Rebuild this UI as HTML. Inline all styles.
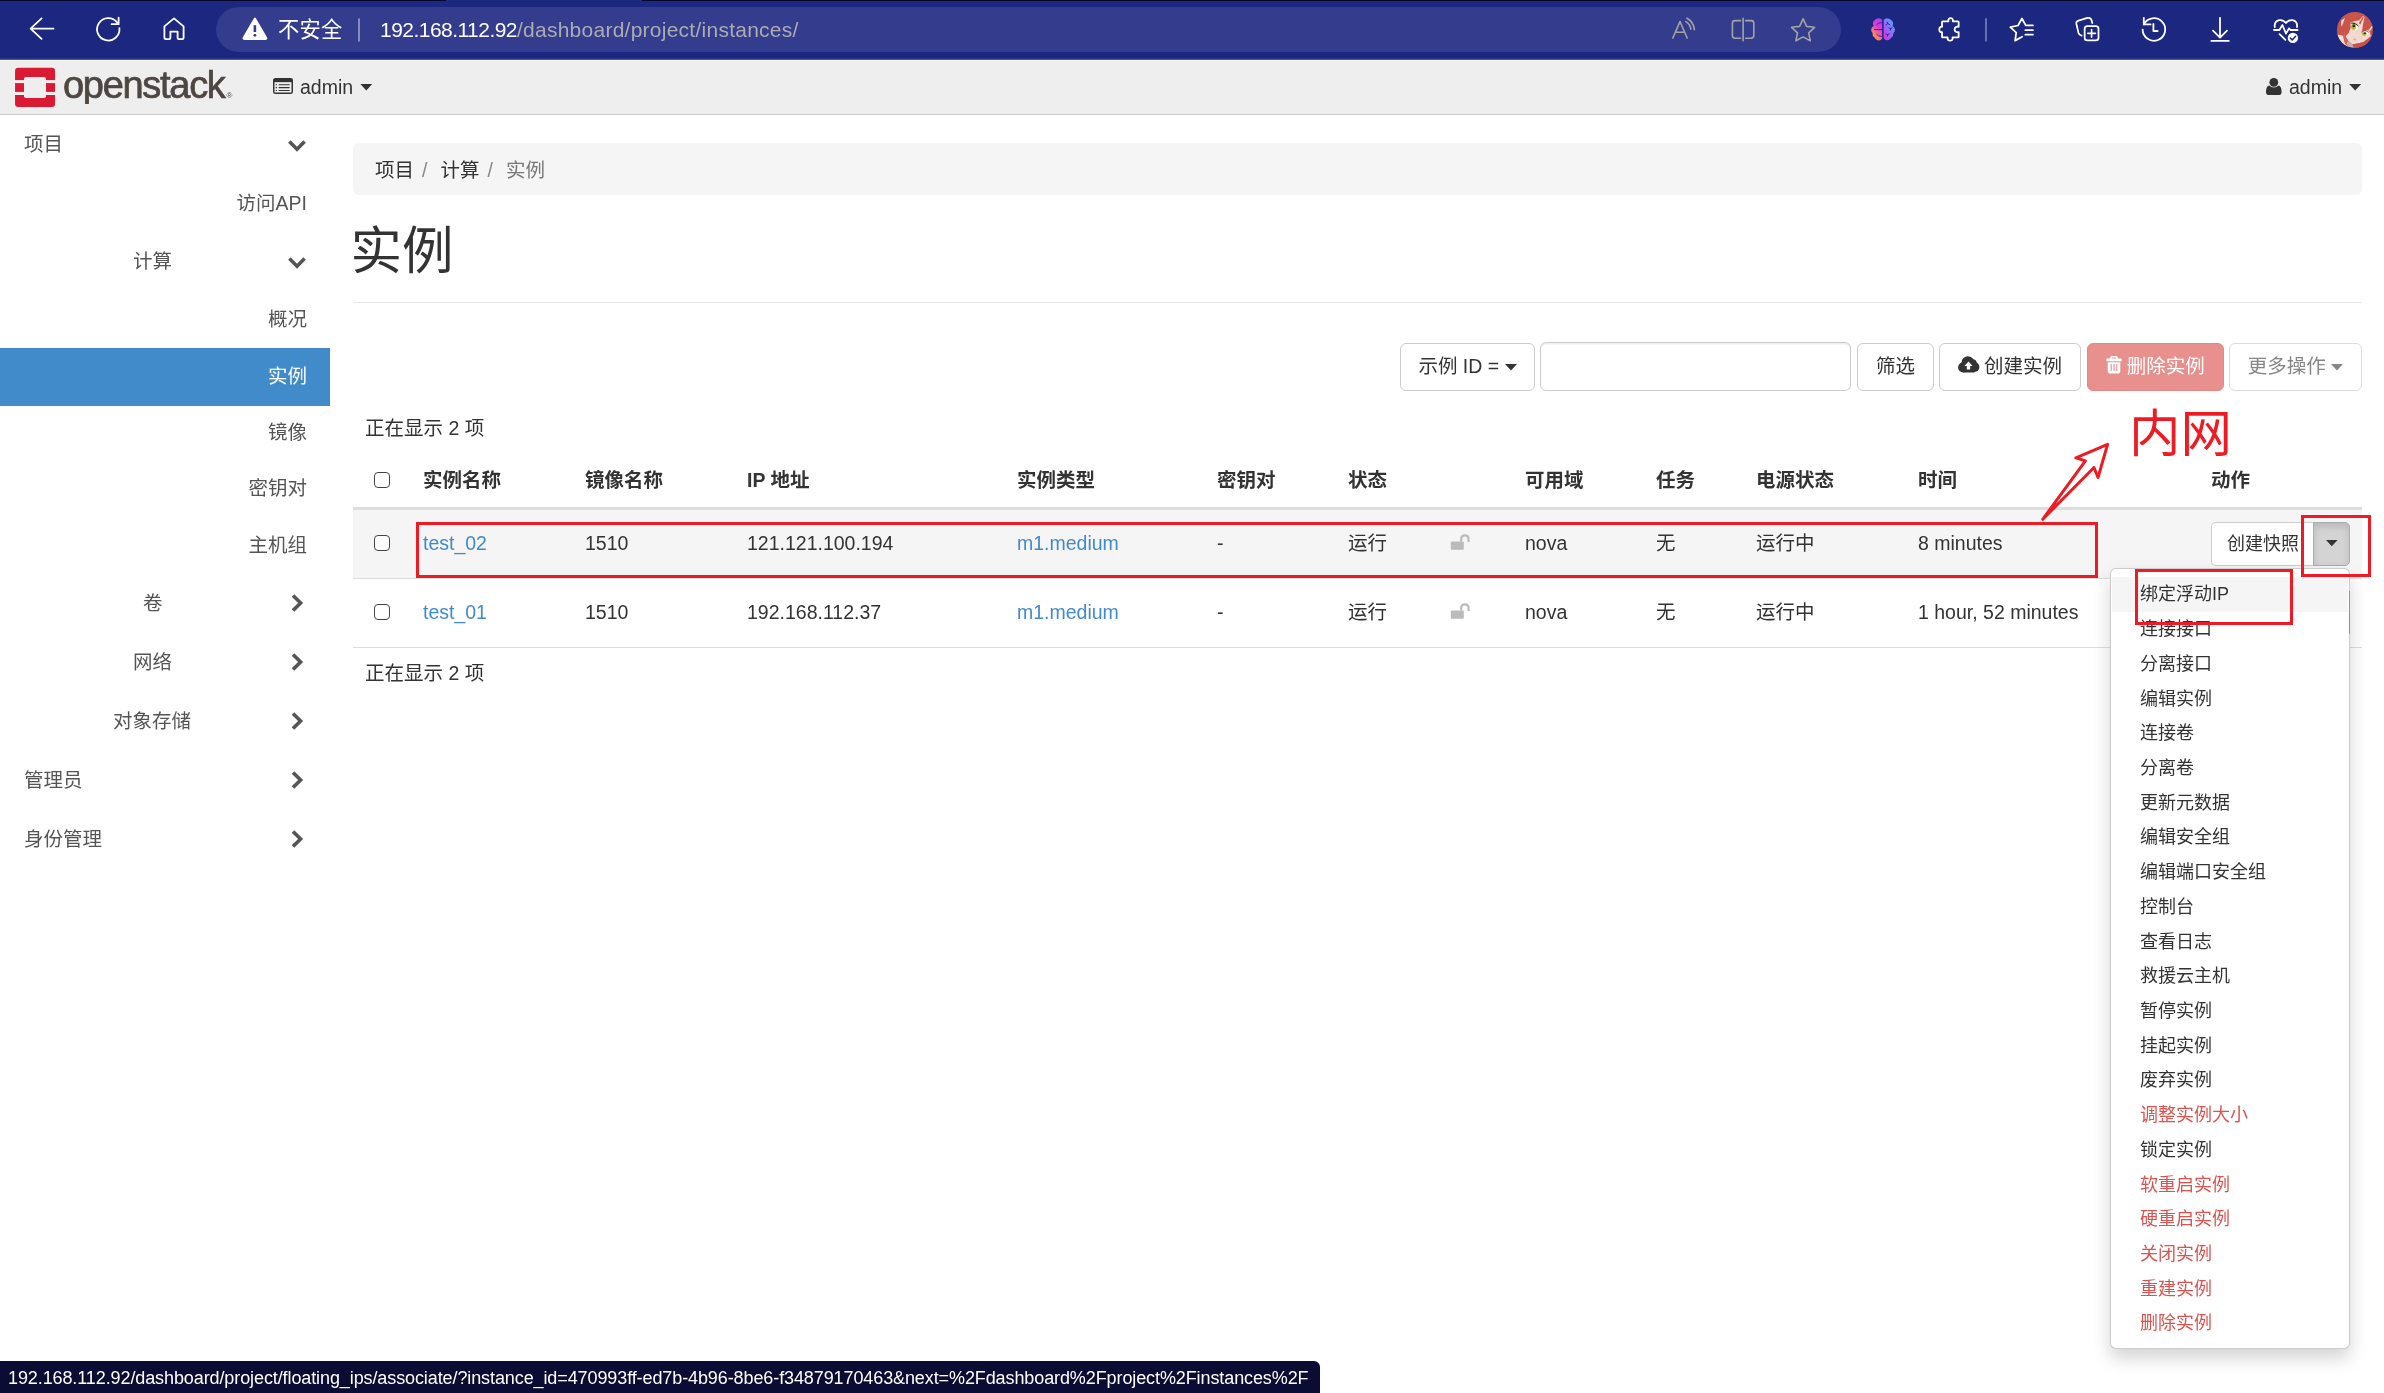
<!DOCTYPE html>
<html lang="zh-CN">
<head>
<meta charset="utf-8">
<title>实例 - OpenStack Dashboard</title>
<style>
*{box-sizing:border-box;margin:0;padding:0}
html,body{width:2384px;height:1393px;overflow:hidden;background:#fff}
body{will-change:transform}
body{position:relative;font-family:"Liberation Sans","Noto Sans CJK SC",sans-serif;font-size:19.5px;color:#333;line-height:1}
.abs{position:absolute;white-space:nowrap}
/* ---------- browser chrome ---------- */
#chrome{position:absolute;left:0;top:0;width:2384px;height:60px;background:#1c2780}
#chrome .topline{position:absolute;left:0;top:0;width:100%;height:1px;background:#05062a}
#chrome .botline{position:absolute;left:0;top:57.5px;width:100%;height:2.5px;background:#4a539a;border-top:1px solid #2c3689}
#pill{position:absolute;left:216px;top:7px;width:1625px;height:45px;border-radius:23px;background:#333c8d}
#chrome svg{position:absolute;overflow:visible}
.ct{position:absolute;white-space:nowrap;color:#fff;font-size:21px;line-height:30px;top:14.5px}
/* ---------- navbar ---------- */
#navbar{position:absolute;left:0;top:60px;width:2384px;height:55px;background:#eee;border-top:1px solid #f7f7f3;border-bottom:1.5px solid #ccc}
/* ---------- sidebar ---------- */
.sb{position:absolute;white-space:nowrap;font-size:19.5px;line-height:28px;color:#555}
.sb.r{right:2077px;text-align:right}
#sel{position:absolute;left:0;top:348px;width:330px;height:58px;background:#428bca}
.chev{position:absolute;width:18px;height:18px}
/* ---------- content ---------- */
#crumb{position:absolute;left:353px;top:143px;width:2009px;height:52px;background:#f5f5f5;border-radius:6px}
#hr{position:absolute;left:353px;top:302px;width:2009px;height:1px;background:#e8e8e8}
.btn{position:absolute;top:343px;height:48px;border:1.5px solid #ccc;border-radius:6px;background:#fff;font-size:19.5px;line-height:44px;color:#333;white-space:nowrap;text-align:center}
.th{position:absolute;white-space:nowrap;font-weight:bold;font-size:19.5px;line-height:28px;top:466px;color:#333}
.td{position:absolute;white-space:nowrap;font-size:19.5px;line-height:28px;color:#333}
.lnk{color:#428bca}
.cb{position:absolute;width:16px;height:16px;border:1.8px solid #444;border-radius:4px;background:#fff}
.red{position:absolute;border:3px solid #ed1c24}
.mi{position:absolute;left:2140px;white-space:nowrap;font-size:18px;line-height:26px;color:#333}
.mi.d{color:#d9534f}
</style>
</head>
<body>

<!-- ================= BROWSER CHROME ================= -->
<div id="chrome">
  <div class="topline"></div>
  <div style="position:absolute;left:446px;top:0;width:196px;height:1px;background:#1c2780"></div>
  <div class="botline"></div>
  <div id="pill"></div>

  <svg width="2384" height="60" viewBox="0 0 2384 60" style="left:0;top:0" fill="none" stroke="#fff" stroke-width="1.8" stroke-linecap="round" stroke-linejoin="round">
    <!-- back -->
    <path d="M53.5 28.6H30.6M41.6 18.4L30.6 28.6L41.6 38.8"/>
    <!-- refresh -->
    <path d="M119.4 28.2A11.2 11.2 0 1 1 117.2 22.6"/>
    <path d="M118.6 17.6V24.2H111.6"/>
    <!-- home -->
    <path d="M174 18.4L164.4 26.4V37.6Q164.4 39.2 166 39.2H169.2Q170.4 39.2 170.4 38V31.6H177.6V38Q177.6 39.2 178.8 39.2H182Q183.6 39.2 183.6 37.6V26.4Z"/>
    <!-- warning triangle -->
    <path d="M254.9 18.6L266 37.4Q266.8 38.9 265.2 38.9H244.6Q243 38.9 243.8 37.4Z" fill="#fff" stroke-width="2"/>
    <path d="M254.9 25.2V32" stroke="#333c8d" stroke-width="2.6" stroke-linecap="butt"/>
    <circle cx="254.9" cy="35.3" r="1.4" fill="#333c8d" stroke="none"/>
    <!-- url separator -->
    <path d="M359 18.4V41.6" stroke="#9096c4" stroke-width="1.8" stroke-linecap="butt"/>
    <!-- read aloud -->
    <g stroke="#a3a3a3" stroke-width="1.6">
      <path d="M1672.8 38L1680 21.6L1687.2 38M1675.4 32.3H1684.6"/>
      <path d="M1685.8 21.6Q1690 24 1690.8 29.2"/>
      <path d="M1687 18.2Q1693.4 21.6 1694.4 29.6"/>
      <!-- split screen -->
      <path d="M1740.6 20.6H1735Q1732.4 20.6 1732.4 23.2V35.6Q1732.4 38.2 1735 38.2H1740.6M1745.6 20.6H1751.2Q1753.8 20.6 1753.8 23.2V35.6Q1753.8 38.2 1751.2 38.2H1745.6M1743.1 18.2V40.8"/>
      <!-- star -->
      <path d="M1803.1 18.8L1806.6 26.4L1814.6 27.3L1808.7 32.9L1810.3 40.8L1803.1 36.9L1795.9 40.8L1797.5 32.9L1791.6 27.3L1799.6 26.4Z"/>
    </g>
    <!-- brain -->
    <defs>
      <linearGradient id="bl" x1="0.85" y1="0" x2="0.25" y2="1"><stop offset="0" stop-color="#b93cf6"/><stop offset=".4" stop-color="#d93ad8"/><stop offset=".65" stop-color="#f26a8c"/><stop offset=".95" stop-color="#ffa52a"/></linearGradient>
      <linearGradient id="br" x1="0.9" y1="0" x2="0.1" y2="1"><stop offset="0" stop-color="#45b4ff"/><stop offset=".45" stop-color="#8a72f8"/><stop offset="1" stop-color="#dc30e4"/></linearGradient>
    </defs>
    <g transform="translate(1860,8) scale(0.05033)">
      <path d="M440 240Q420 205 370 205Q310 210 290 245Q250 270 258 315Q262 345 272 360Q225 385 222 425Q222 465 250 495Q238 550 290 585Q310 625 350 640Q400 660 440 610Z" fill="url(#bl)" stroke="none"/>
      <path d="M470 240Q490 205 540 205Q600 210 622 245Q662 270 658 315Q656 345 648 360Q692 385 695 425Q695 465 664 495Q672 550 615 595Q590 630 555 640Q505 650 470 600Z" fill="url(#br)" stroke="none"/>
      <path d="M288 428H440M330 332Q350 292 432 290M330 522Q350 562 432 566M518 332L552 310L546 282M552 310L592 332M578 398L612 410L642 388M612 410L602 442M514 514L546 530L582 514M546 530V558" stroke="#1c2780" stroke-width="17" fill="none"/>
      <path d="M1630 277Q1630 265 1642 265L1757 265C1730 182 1870 182 1843 265L1948 265Q1960 265 1960 277L1960 374C1853 346 1853 506 1960 478L1960 573Q1960 585 1948 585L1838 585C1865 668 1715 668 1742 585L1642 585Q1630 585 1630 573L1630 478C1558 502 1558 350 1630 374Z" stroke-width="36"/>
    </g>
    <!-- separator -->
    <path d="M1986 18.2V41.6" stroke="#7b82b8" stroke-width="1.6" stroke-linecap="butt"/>
    <!-- favorites + collections -->
    <g transform="translate(2000,8) scale(0.05033)" stroke-width="35">
      <path d="M440 572L300 648L322 490L205 382L358 348L436 208L512 346H654M504 440H654M504 530H654"/>
      <path d="M1622 548Q1570 535 1558 490L1518 318Q1508 268 1560 252L1738 198Q1800 182 1818 240L1834 298"/>
      <rect x="1682" y="362" width="275" height="280" rx="52"/>
      <path d="M1820 428V580M1744 504H1896" stroke-width="32"/>
    </g>
    <!-- history -->
    <path d="M2143.8 24.4A11.3 11.3 0 1 1 2142.6 29.6"/>
    <path d="M2143.8 17.8V24.4H2150.6"/>
    <path d="M2153.4 24V31H2157.6"/>
    <!-- download -->
    <path d="M2220 17.8V37.4M2213 30.6L2220 37.6L2227 30.6M2211.4 40.9H2228.8"/>
    <!-- heart pulse -->
    <path d="M2274.8 27.2Q2274 21.4 2279.2 20.2Q2283.2 19.6 2285.9 23Q2288.6 19.6 2292.6 20.2Q2297.8 21.4 2297 27.2"/>
    <path d="M2274 30H2279.4L2282.4 25L2286 33.6L2289 28.4L2290.6 30H2297.6M2279.6 34.2L2285.4 39.8"/>
    <circle cx="2292.9" cy="37.9" r="5.2" fill="#fff" stroke="none"/>
    <path d="M2290.3 38L2292.2 39.9L2295.6 36.2" stroke="#1c2780" stroke-width="1.5"/>
    <!-- avatar -->
    <defs><clipPath id="av"><circle cx="2354.9" cy="29.9" r="18"/></clipPath></defs>
    <g clip-path="url(#av)" stroke="none"><g transform="translate(2330,6) scale(0.03446)">
      <rect x="150" y="120" width="1150" height="1150" fill="#c8544c"/>
      <path d="M590 480L700 440L850 410L960 285L1005 335L960 520L935 700L900 790L1010 720L1110 700L1160 770L1185 880L960 1050L650 1115L520 1000L450 880L540 780L600 640Z" fill="#f1d9cf"/>
      <path d="M215 830L380 860L440 1100L560 1190L480 1230L300 1100L215 920Z" fill="#f3ddd2"/>
      <path d="M520 1010L650 1120L710 1215L560 1195L470 1090Z" fill="#c2b4aa"/>
      <path d="M650 1115L960 1050L1200 900L1180 1100L1000 1230L700 1230Z" fill="#c8524a"/>
      <path d="M380 860L440 1100L470 1090L520 1000L450 880L430 700Z" fill="#d0605a"/>
      <path d="M325 430L435 340L360 560L320 590Z" fill="#f0ddd6"/>
      <path d="M840 500L960 300L985 320L880 540Z" fill="#c8544c"/>
      <path d="M1120 700L1225 565L1235 615L1160 735Z" fill="#f3e3dc"/>
      <ellipse cx="740" cy="610" rx="70" ry="85" fill="#fff"/>
      <ellipse cx="685" cy="605" rx="75" ry="88" fill="#b4b52c"/>
      <ellipse cx="690" cy="580" rx="40" ry="40" fill="#2e2a12"/>
      <path d="M590 490Q720 440 850 600L820 590Q720 490 600 510Z" fill="#3a1f1c"/>
      <ellipse cx="1060" cy="800" rx="50" ry="55" fill="#fff"/>
      <ellipse cx="995" cy="815" rx="72" ry="50" fill="#b9b92e"/>
      <ellipse cx="1010" cy="790" rx="36" ry="28" fill="#3a3414"/>
      <path d="M1000 715Q1090 690 1140 800L1110 770Q1070 720 1000 730Z" fill="#3a1f1c"/>
      <ellipse cx="720" cy="972" rx="38" ry="30" fill="#ee9f96"/>
    </g></g>
  </svg>
  <div class="ct" style="left:278px;top:15px;font-size:21.3px;letter-spacing:0.2px">不安全</div>
  <div class="ct" id="url" style="left:380px;font-size:21px;letter-spacing:-0.53px">192.168.112.92<span style="color:#acacb0;letter-spacing:0.25px">/dashboard/project/instances/</span></div>
</div>

<!-- ================= NAVBAR ================= -->
<div id="navbar"></div>
<svg class="abs" style="left:14px;top:67px" width="42" height="41" viewBox="0 0 42 41">
  <rect x="1.05" y="0.8" width="40" height="39.1" rx="3.2" fill="#da1a32"/>
  <rect x="10" y="10" width="22" height="21" rx="1.8" fill="#eee"/>
  <rect x="0" y="13.1" width="11" height="3" fill="#eee"/>
  <rect x="31" y="13.1" width="11" height="3" fill="#eee"/>
  <rect x="0" y="24.9" width="11" height="3.1" fill="#eee"/>
  <rect x="31" y="24.9" width="11" height="3.1" fill="#eee"/>
</svg>
<div class="abs" id="logotxt" style="left:63px;top:59.5px;height:44.2px;overflow:hidden;padding-right:3px;font-size:38px;line-height:50px;color:#4e4641;letter-spacing:-1.3px;-webkit-text-stroke:0.7px #4e4641">openstack<span style="font-size:8px;letter-spacing:0;-webkit-text-stroke:0;position:relative;top:0px;left:2px">&reg;</span></div>
<svg class="abs" style="left:272px;top:78px" width="22" height="17" viewBox="0 0 22 17">
  <rect x="1.75" y="0.85" width="18.5" height="14.5" rx="1.7" fill="none" stroke="#333" stroke-width="1.5"/>
  <rect x="1.75" y="0.85" width="18.5" height="3.3" fill="#333"/>
  <path d="M3.7 6.7h1.3M6.7 6.7h11M3.7 9.6h1.3M6.7 9.6h11M3.7 12.5h1.3M6.7 12.5h11" stroke="#333" stroke-width="1.15"/>
</svg>
<div class="abs" id="nvadmin" style="left:300px;top:73px;line-height:28px;color:#333">admin</div>
<svg class="abs" style="left:360px;top:84px" width="13" height="7" viewBox="0 0 13 7"><path d="M0.4 0h11.8L6.3 6.6Z" fill="#333"/></svg>
<svg class="abs" style="left:2265px;top:77px" width="18" height="19" viewBox="0 0 18 19">
  <circle cx="8.8" cy="5.3" r="4.4" fill="#333"/>
  <path d="M4.2 8.6Q1.2 9.2 1 14.6Q0.8 18 3.4 18H14.2Q16.8 18 16.6 14.6Q16.4 9.2 13.4 8.6Q11.4 10.6 8.8 10.6Q6.2 10.6 4.2 8.6Z" fill="#333"/>
</svg>
<div class="abs" id="nvadmin2" style="left:2289px;top:73px;line-height:28px;color:#333">admin</div>
<svg class="abs" style="left:2349px;top:84px" width="13" height="7" viewBox="0 0 13 7"><path d="M0.2 0h12L6.2 6.6Z" fill="#333"/></svg>

<!-- ================= SIDEBAR ================= -->
<div id="sel"></div>
<div class="sb" style="left:24px;top:130px">项目</div>
<svg class="abs" style="left:286px;top:139px" width="22" height="14" viewBox="0 0 22 14"><path d="M3.4 2.6L11 10.2L18.6 2.6" fill="none" stroke="#555" stroke-width="3.6"/></svg>
<div class="sb r" style="top:189px">访问API</div>
<div class="sb" style="left:133px;top:247px">计算</div>
<svg class="abs" style="left:286px;top:256px" width="22" height="14" viewBox="0 0 22 14"><path d="M3.4 2.6L11 10.2L18.6 2.6" fill="none" stroke="#555" stroke-width="3.6"/></svg>
<div class="sb r" style="top:305px">概况</div>
<div class="sb r" style="top:362px;color:#fff">实例</div>
<div class="sb r" style="top:418px">镜像</div>
<div class="sb r" style="top:474px">密钥对</div>
<div class="sb r" style="top:531px">主机组</div>
<div class="sb" style="left:143px;top:589px">卷</div>
<svg class="abs" style="left:290px;top:592px" width="14" height="22" viewBox="0 0 14 22"><path d="M3 3.4L10.6 11L3 18.6" fill="none" stroke="#555" stroke-width="3.6"/></svg>
<div class="sb" style="left:133px;top:648px">网络</div>
<svg class="abs" style="left:290px;top:651px" width="14" height="22" viewBox="0 0 14 22"><path d="M3 3.4L10.6 11L3 18.6" fill="none" stroke="#555" stroke-width="3.6"/></svg>
<div class="sb" style="left:113px;top:707px">对象存储</div>
<svg class="abs" style="left:290px;top:710px" width="14" height="22" viewBox="0 0 14 22"><path d="M3 3.4L10.6 11L3 18.6" fill="none" stroke="#555" stroke-width="3.6"/></svg>
<div class="sb" style="left:24px;top:766px">管理员</div>
<svg class="abs" style="left:290px;top:769px" width="14" height="22" viewBox="0 0 14 22"><path d="M3 3.4L10.6 11L3 18.6" fill="none" stroke="#555" stroke-width="3.6"/></svg>
<div class="sb" style="left:24px;top:825px">身份管理</div>
<svg class="abs" style="left:290px;top:828px" width="14" height="22" viewBox="0 0 14 22"><path d="M3 3.4L10.6 11L3 18.6" fill="none" stroke="#555" stroke-width="3.6"/></svg>

<!-- ================= CONTENT ================= -->
<div id="crumb"></div>
<div class="abs" id="bc" style="left:375px;top:156px;font-size:19.5px;line-height:28px;color:#333">项目<span style="color:#8a8a8a;padding:0 13px 0 8px">/</span>计算<span style="color:#8a8a8a;padding:0 13px 0 8px">/</span><span style="color:#777">实例</span></div>
<div class="abs" id="h1" style="left:350.5px;top:215.5px;font-size:51.5px;line-height:70px;color:#333">实例</div>
<div id="hr"></div>

<!-- toolbar -->
<div class="btn" style="left:1400px;width:135px">示例 ID = <svg width="12" height="7" viewBox="0 0 12 7" style="vertical-align:2px"><path d="M0 0h12L6 6.6Z" fill="#333"/></svg></div>
<div class="btn" style="left:1540px;width:311px;top:342px;height:49px;box-shadow:inset 0 1.5px 1.5px rgba(0,0,0,.075)"></div>
<div class="btn" style="left:1857px;width:77px">筛选</div>
<div class="btn" style="left:1939px;width:142px"><svg width="22" height="17" viewBox="0 0 22 17" style="vertical-align:-0.2px;margin-right:4px"><g fill="#333"><circle cx="5.2" cy="11.4" r="5.1"/><circle cx="9.9" cy="6.5" r="6.3"/><circle cx="14.8" cy="7" r="3.8"/><circle cx="16.5" cy="11" r="4.9"/><rect x="5" y="9" width="11.6" height="7.5"/></g><path d="M10.5 5.6L14.6 10H12.2V13.6H8.8V10H6.4Z" fill="#fff"/></svg>创建实例</div>
<div class="btn" style="left:2087px;width:137px;background:#e8908d;border-color:#e58884;color:#fff"><svg width="16" height="18" viewBox="0 0 16 18" style="vertical-align:-1.4px;margin-right:4.6px"><path d="M5 3V1.6Q5 0.8 5.8 0.8H10.2Q11 0.8 11 1.6V3" fill="none" stroke="#fff" stroke-width="1.6"/><rect x="0.3" y="2.6" width="15.4" height="2.7" rx="0.8" fill="#fff"/><path d="M1.7 6.2H14.3V15.6Q14.3 17.4 12.5 17.4H3.5Q1.7 17.4 1.7 15.6Z" fill="#fff"/><path d="M5.2 8v7M8 8v7M10.8 8v7" stroke="#e8908d" stroke-width="1.1"/></svg>删除实例</div>
<div class="btn" style="left:2229px;width:133px;color:#868686;border-color:#ddd">更多操作 <svg width="12" height="7" viewBox="0 0 12 7" style="vertical-align:2px"><path d="M0 0h12L6 6.6Z" fill="#868686"/></svg></div>

<!-- table -->
<div class="td" style="left:365px;top:414px">正在显示 2 项</div>
<div style="position:absolute;left:353px;top:507px;width:2009px;height:3px;background:#ddd"></div>
<div style="position:absolute;left:353px;top:510px;width:2009px;height:68px;background:#f5f5f5"></div>
<div style="position:absolute;left:353px;top:577.5px;width:2009px;height:1.5px;background:#ddd"></div>
<div style="position:absolute;left:353px;top:646.5px;width:2009px;height:1.5px;background:#ddd"></div>
<div class="cb" style="left:374px;top:472px"></div>
<div class="cb" style="left:374px;top:535px"></div>
<div class="cb" style="left:374px;top:604px"></div>
<div class="th" style="left:423px">实例名称</div>
<div class="th" style="left:585px">镜像名称</div>
<div class="th" style="left:747px">IP 地址</div>
<div class="th" style="left:1017px">实例类型</div>
<div class="th" style="left:1217px">密钥对</div>
<div class="th" style="left:1348px">状态</div>
<div class="th" style="left:1525px">可用域</div>
<div class="th" style="left:1656px">任务</div>
<div class="th" style="left:1756px">电源状态</div>
<div class="th" style="left:1918px">时间</div>
<div class="th" style="left:2211px">动作</div>
<div class="td" style="left:423px;top:529px"><span class="lnk">test_02</span></div>
<div class="td" style="left:585px;top:529px">1510</div>
<div class="td" style="left:747px;top:529px">121.121.100.194</div>
<div class="td" style="left:1017px;top:529px"><span class="lnk">m1.medium</span></div>
<div class="td" style="left:1217px;top:529px">-</div>
<div class="td" style="left:1348px;top:529px">运行</div>
<div class="td" style="left:1525px;top:529px">nova</div>
<div class="td" style="left:1656px;top:529px">无</div>
<div class="td" style="left:1756px;top:529px">运行中</div>
<div class="td" style="left:1918px;top:529px">8 minutes</div>
<svg class="abs" style="left:1450px;top:534px" width="20" height="17" viewBox="0 0 20 17"><rect x="0.8" y="7.4" width="13" height="8.4" rx="1" fill="#bbb"/><path d="M11.2 7.6V5.2Q11.2 1.4 14.9 1.4Q18.6 1.4 18.6 5.2V8" fill="none" stroke="#bbb" stroke-width="2.2"/></svg>
<div class="td" style="left:423px;top:598px"><span class="lnk">test_01</span></div>
<div class="td" style="left:585px;top:598px">1510</div>
<div class="td" style="left:747px;top:598px">192.168.112.37</div>
<div class="td" style="left:1017px;top:598px"><span class="lnk">m1.medium</span></div>
<div class="td" style="left:1217px;top:598px">-</div>
<div class="td" style="left:1348px;top:598px">运行</div>
<div class="td" style="left:1525px;top:598px">nova</div>
<div class="td" style="left:1656px;top:598px">无</div>
<div class="td" style="left:1756px;top:598px">运行中</div>
<div class="td" style="left:1918px;top:598px">1 hour, 52 minutes</div>
<svg class="abs" style="left:1450px;top:603px" width="20" height="17" viewBox="0 0 20 17"><rect x="0.8" y="7.4" width="13" height="8.4" rx="1" fill="#bbb"/><path d="M11.2 7.6V5.2Q11.2 1.4 14.9 1.4Q18.6 1.4 18.6 5.2V8" fill="none" stroke="#bbb" stroke-width="2.2"/></svg>
<div class="td" style="left:365px;top:659px">正在显示 2 项</div>
<div style="position:absolute;left:2210.5px;top:522px;width:104px;height:44px;border:1.5px solid #ccc;border-right:0;border-radius:5px 0 0 5px;background:#fff"></div>
<div class="abs" style="left:2227px;top:531px;font-size:18px;line-height:26px;color:#333">创建快照</div>
<div style="position:absolute;left:2313px;top:522px;width:37px;height:44px;border:1.5px solid #adadad;border-radius:0 5px 5px 0;background:#d4d4d4;box-shadow:inset 0 4px 7px rgba(0,0,0,.125)"></div>
<svg class="abs" style="left:2326px;top:540px" width="12" height="7" viewBox="0 0 12 7"><path d="M0 0h11.6L5.8 6.2Z" fill="#333"/></svg>
<div id="menu" style="position:absolute;left:2110px;top:568px;width:239.5px;height:780.5px;background:#fff;border:1.5px solid rgba(0,0,0,.2);border-radius:6px;box-shadow:0 9px 18px rgba(0,0,0,.175)"></div>
<div style="position:absolute;left:2112px;top:577px;width:236px;height:34.5px;background:#f5f5f5"></div>
<div style="position:absolute;left:2349px;top:591px;width:1px;height:43px;background:rgba(0,0,0,.28)"></div>
<div class="mi" style="top:581.4px">绑定浮动IP</div>
<div class="mi" style="top:616.1px">连接接口</div>
<div class="mi" style="top:650.8px">分离接口</div>
<div class="mi" style="top:685.5px">编辑实例</div>
<div class="mi" style="top:720.3px">连接卷</div>
<div class="mi" style="top:755.0px">分离卷</div>
<div class="mi" style="top:789.7px">更新元数据</div>
<div class="mi" style="top:824.4px">编辑安全组</div>
<div class="mi" style="top:859.1px">编辑端口安全组</div>
<div class="mi" style="top:893.8px">控制台</div>
<div class="mi" style="top:928.5px">查看日志</div>
<div class="mi" style="top:963.3px">救援云主机</div>
<div class="mi" style="top:998.0px">暂停实例</div>
<div class="mi" style="top:1032.7px">挂起实例</div>
<div class="mi" style="top:1067.4px">废弃实例</div>
<div class="mi d" style="top:1102.1px">调整实例大小</div>
<div class="mi" style="top:1136.8px">锁定实例</div>
<div class="mi d" style="top:1171.5px">软重启实例</div>
<div class="mi d" style="top:1206.3px">硬重启实例</div>
<div class="mi d" style="top:1241.0px">关闭实例</div>
<div class="mi d" style="top:1275.7px">重建实例</div>
<div class="mi d" style="top:1310.4px">删除实例</div>
<div class="red" style="left:416px;top:522px;width:1682px;height:56px"></div>
<div class="red" style="left:2301px;top:515px;width:70px;height:62px"></div>
<div class="red" style="left:2135px;top:568.5px;width:158px;height:56.5px"></div>
<div class="abs" id="nw" style="left:2129px;top:400px;font-size:51.5px;line-height:68px;color:#ed1c24">内网</div>
<svg class="abs" style="left:2030px;top:435px" width="90" height="95" viewBox="2030 435 90 95"><path d="M2042.7 519.3L2085.4 460.9L2075.9 457.9L2107.6 444.3L2098 477.5L2094 467.5Z" fill="none" stroke="#ed1c24" stroke-width="3" stroke-linejoin="round"/></svg>
<!-- status bar -->
<div style="position:absolute;left:0;top:1361px;width:1320px;height:32px;background:#0b0c33;border-top-right-radius:6px"></div>
<div class="abs" id="status" style="left:8px;top:1365px;font-size:18px;line-height:26px;color:#fff;letter-spacing:-0.1px">192.168.112.92/dashboard/project/floating_ips/associate/?instance_id=470993ff-ed7b-4b96-8be6-f34879170463&amp;next=%2Fdashboard%2Fproject%2Finstances%2F</div>

</body>
</html>
